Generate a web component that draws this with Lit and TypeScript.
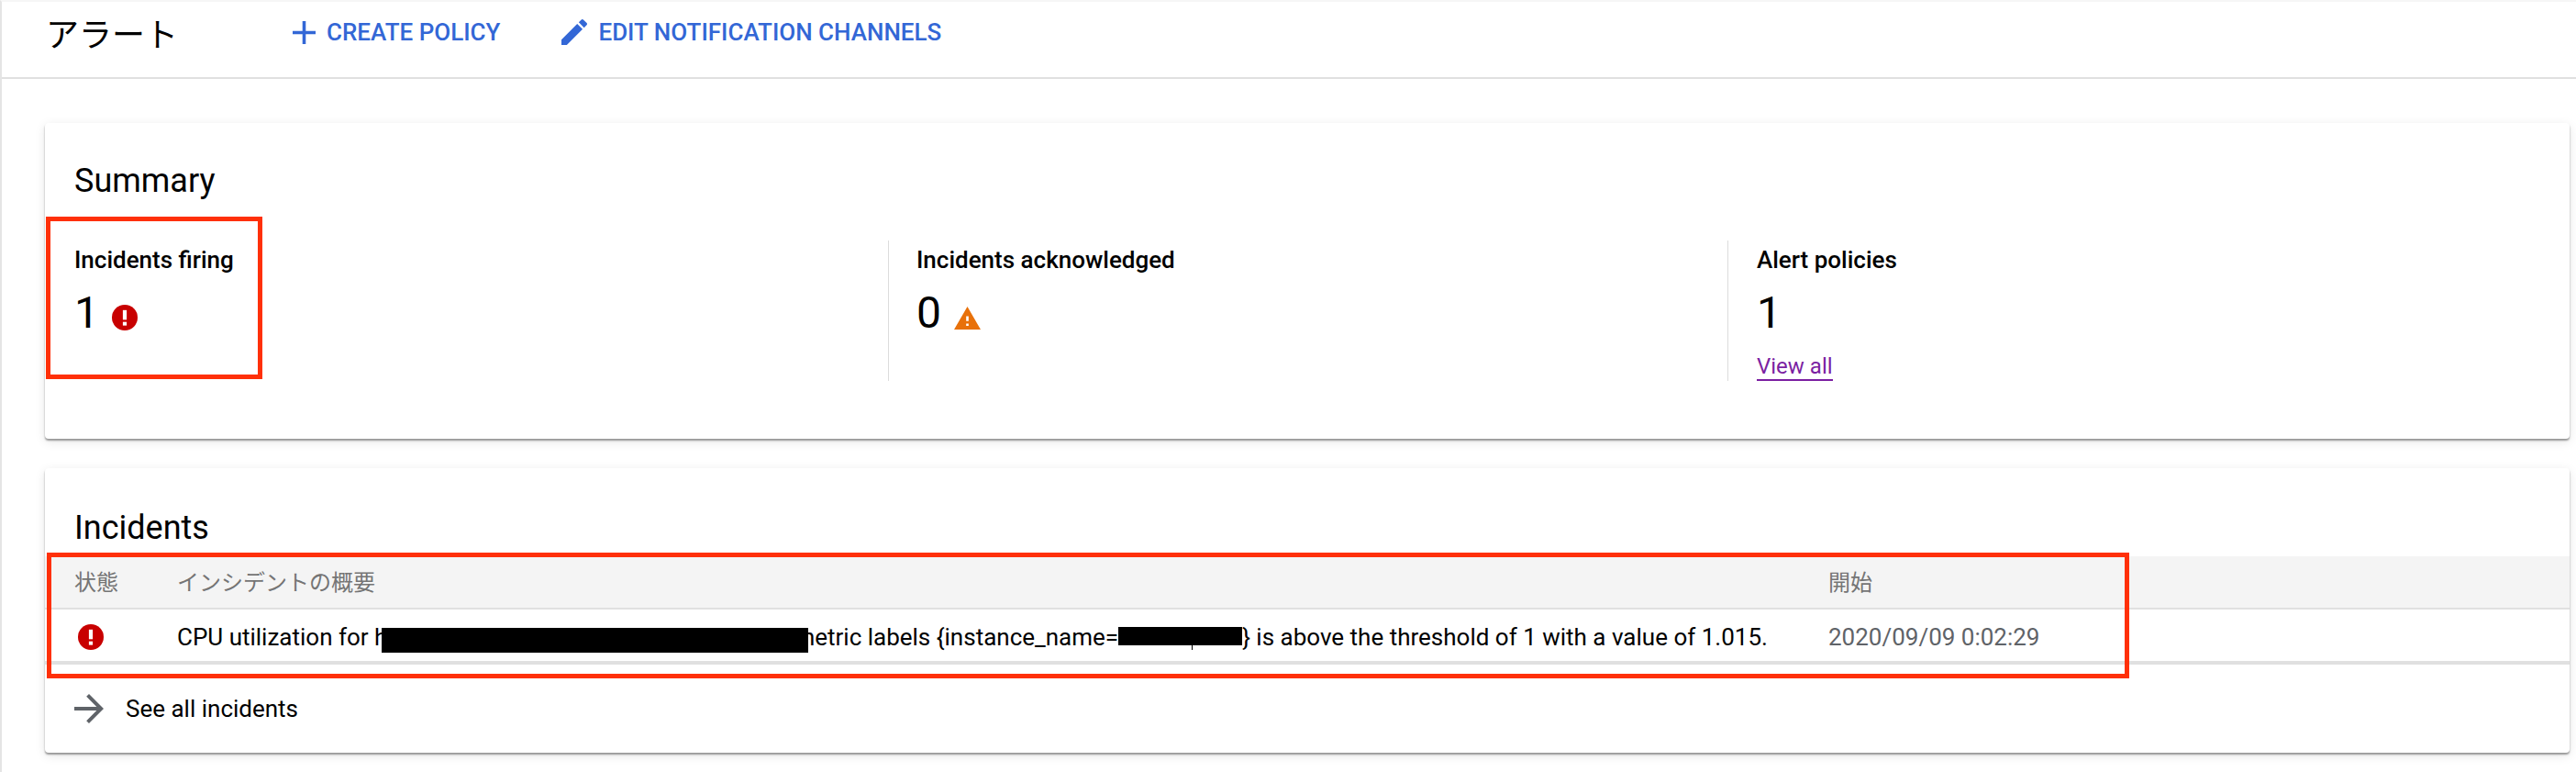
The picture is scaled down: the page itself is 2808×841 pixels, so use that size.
import { LitElement, css, html, svg } from 'lit';
import { customElement } from 'lit/decorators.js';

const errorIcon = svg`<path fill="#c80000" d="M12 0a12 12 0 1 0 0 24 12 12 0 0 0 0-24z"/><rect x="10.2" y="5" width="3.6" height="9" fill="#fff"/><rect x="10.2" y="16" width="3.6" height="3.4" fill="#fff"/>`;

@customElement('app-root')
export class AppRoot extends LitElement {
  static styles = css`
    :host {
      display: block;
      width: 2808px;
      height: 841px;
      box-sizing: border-box;
      overflow: hidden;
      background: #fff;
      border-left: 2px solid #e4e4e4;
      border-top: 2px solid #f6f6f6;
      font-family: Roboto, "Noto Sans CJK JP", sans-serif;
      color: #000;
    }

    .toolbar {
      display: flex;
      align-items: center;
      box-sizing: border-box;
      height: 84px;
      padding: 0 0 16px 48px;
      border-bottom: 2px solid #e0e0e0;
    }

    .page-title {
      width: 269px;
      font-size: 36px;
      font-weight: 400;
      margin: 0;
    }

    .action {
      display: flex;
      align-items: center;
      gap: 12px;
      margin-right: 67px;
      color: #3367d6;
      font-size: 26px;
      font-weight: 500;
      text-transform: uppercase;
    }

    .action svg {
      fill: #3367d6;
      display: block;
    }

    .card {
      position: relative;
      box-sizing: border-box;
      margin: 0 7px 0 47px;
      background: #fff;
      border-radius: 4px;
      box-shadow: 0 2px 2px rgba(0, 0, 0, 0.38), 0 3px 12px rgba(0, 0, 0, 0.1);
    }

    .summary {
      height: 344px;
      margin-top: 48px;
      padding-top: 40px;
    }

    .incidents {
      height: 310px;
      margin-top: 32px;
      padding-top: 42px;
    }

    h2 {
      margin: 0;
      padding-left: 32px;
      font-size: 36px;
      line-height: 46px;
      font-weight: 400;
    }

    .stats {
      display: grid;
      grid-template-columns: 919px 915px 1fr;
      margin-top: 42px;
      height: 152px;
    }

    .stat {
      padding: 6px 0 0 30px;
      border-left: 1px solid #dcdcdc;
    }

    .stat:first-child {
      padding-left: 32px;
      border-left: none;
    }

    .stat:last-child {
      padding-left: 31px;
    }

    .stat-label {
      font-size: 26px;
      line-height: 30px;
      font-weight: 500;
    }

    .stat-value {
      display: flex;
      align-items: flex-end;
      gap: 14px;
      margin-top: 15px;
      font-size: 48px;
      line-height: 56px;
    }

    .stat-value svg {
      display: block;
      margin-bottom: 9px;
    }

    .stat-value .warn {
      margin-bottom: 10px;
    }

    .view-all {
      display: inline-block;
      margin-top: 16px;
      font-size: 24px;
      line-height: 28px;
      color: #7b1fa2;
      border-bottom: 2px solid #7b1fa2;
    }

    .row {
      display: grid;
      grid-template-columns: 110px 1800px 1fr;
      padding-left: 32px;
      align-items: center;
    }

    .head {
      height: 58px;
      margin-top: 8px;
      padding-bottom: 3px;
      box-sizing: border-box;
      background: #f4f4f4;
      border-bottom: 2px solid #e0e0e0;
      color: #757575;
      font-size: 24px;
    }

    .head span:nth-child(n + 2) {
      margin-left: 2px;
    }

    .body {
      box-sizing: border-box;
      height: 60px;
      border-bottom: 4px solid #e0e0e0;
      font-size: 26px;
      padding: 3px 0 0 34px;
    }

    .body svg {
      display: block;
      margin: 1px 0 0 2px;
    }

    .date {
      color: #5f6368;
    }

    .redact {
      display: inline-block;
      background: #000;
    }

    .redact-host {
      width: 465px;
      height: 27px;
      margin: 0 -16px -8px -6px;
    }

    .redact-instance {
      position: relative;
      width: 135px;
      height: 20px;
    }

    .redact-instance::after {
      content: "";
      position: absolute;
      left: 80px;
      top: 20px;
      width: 1px;
      height: 5px;
      background: #000;
    }

    .see-all {
      display: flex;
      align-items: center;
      gap: 24px;
      margin-top: 32px;
      padding-left: 32px;
      font-size: 26px;
    }

    .see-all svg {
      display: block;
      fill: #5f6368;
    }

    .callout {
      position: absolute;
      box-sizing: border-box;
      border: 5px solid #ff3008;
      pointer-events: none;
    }

    .callout-stat {
      left: 1px;
      top: 102px;
      width: 236px;
      height: 177px;
    }

    .callout-table {
      left: 2px;
      top: 92px;
      width: 2270px;
      height: 137px;
    }
  `;

  render() {
    return html`
      <header class="toolbar">
        <h1 class="page-title">アラート</h1>
        <div class="action">
          <svg width="25" height="25" viewBox="5 5 14 14"><path d="M19 13h-6v6h-2v-6H5v-2h6V5h2v6h6v2z"/></svg>
          Create policy
        </div>
        <div class="action">
          <svg width="28" height="28" viewBox="3 3 18 18"><path d="M3 17.25V21h3.75L17.81 9.94l-3.75-3.75L3 17.25zM20.71 7.04c.39-.39.39-1.02 0-1.41l-2.34-2.34c-.39-.39-1.02-.39-1.41 0l-1.83 1.83 3.75 3.75 1.83-1.83z"/></svg>
          Edit notification channels
        </div>
      </header>

      <section class="card summary">
        <h2>Summary</h2>
        <div class="stats">
          <div class="stat">
            <div class="stat-label">Incidents firing</div>
            <div class="stat-value">
              1
              <svg width="28" height="28" viewBox="0 0 24 24">${errorIcon}</svg>
            </div>
          </div>
          <div class="stat">
            <div class="stat-label">Incidents acknowledged</div>
            <div class="stat-value">
              0
              <svg class="warn" width="29" height="25" viewBox="1 2 22 19"><path fill="#e8710a" d="M1 21h22L12 2 1 21zm12-3h-2v-2h2v2zm0-4h-2v-4h2v4z"/></svg>
            </div>
          </div>
          <div class="stat">
            <div class="stat-label">Alert policies</div>
            <div class="stat-value">1</div>
            <a class="view-all">View all</a>
          </div>
        </div>
        <div class="callout callout-stat"></div>
      </section>

      <section class="card incidents">
        <h2>Incidents</h2>
        <div class="row head">
          <span>状態</span>
          <span>インシデントの概要</span>
          <span>開始</span>
        </div>
        <div class="row body">
          <svg width="28" height="28" viewBox="0 0 24 24">${errorIcon}</svg>
          <span>CPU utilization for h<span class="redact redact-host"></span>metric labels {instance_name=<span class="redact redact-instance"></span>} is above the threshold of 1 with a value of 1.015.</span>
          <span class="date">2020/09/09 0:02:29</span>
        </div>
        <div class="see-all">
          <svg width="32" height="32" viewBox="4 4 16 16"><path d="M12 4l-1.41 1.41L16.17 11H4v2h12.17l-5.58 5.59L12 20l8-8z"/></svg>
          See all incidents
        </div>
        <div class="callout callout-table"></div>
      </section>
    `;
  }
}
